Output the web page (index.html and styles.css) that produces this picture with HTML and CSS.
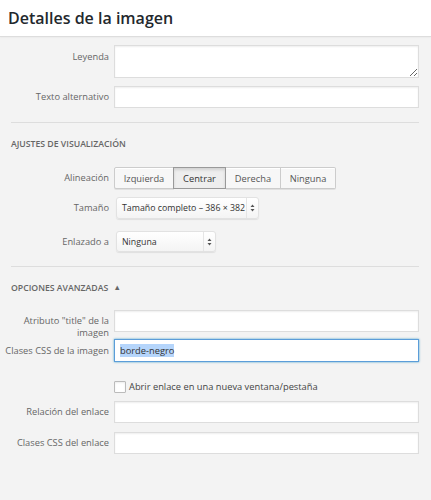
FILE: index.html
```html
<!DOCTYPE html>
<html lang="es">
<head>
<meta charset="utf-8">
<title>Detalles de la imagen</title>
<link rel="stylesheet" href="styles.css">
</head>
<body>
<header class="modal-header">
  <h1>Detalles de la imagen</h1>
</header>
<main class="settings">
  <div class="row row-caption">
    <label class="row-label">Leyenda</label>
    <div class="field"><textarea class="text-area"></textarea></div>
  </div>
  <div class="row row-alt">
    <label class="row-label">Texto alternativo</label>
    <div class="field"><input class="text-input" type="text"></div>
  </div>

  <hr class="divider divider-first">
  <h2 class="section-title">Ajustes de visualización</h2>

  <div class="row row-align">
    <span class="row-label">Alineación</span>
    <div class="button-group">
      <button class="seg-btn">Izquierda</button>
      <button class="seg-btn is-pressed">Centrar</button>
      <button class="seg-btn">Derecha</button>
      <button class="seg-btn">Ninguna</button>
    </div>
  </div>
  <div class="row row-size">
    <span class="row-label">Tamaño</span>
    <div class="select select-size">
      <span class="select-value">Tamaño completo – 386 × 382</span>
      <span class="select-arrows"><svg width="5" height="8" viewBox="0 0 5 8"><path d="M2.5 0.5L4.5 3H0.5Z M2.5 7.5L4.5 5H0.5Z" fill="#555"/></svg></span>
    </div>
  </div>
  <div class="row row-link">
    <span class="row-label">Enlazado a</span>
    <div class="select select-link">
      <span class="select-value">Ninguna</span>
      <span class="select-arrows"><svg width="5" height="8" viewBox="0 0 5 8"><path d="M2.5 0.5L4.5 3H0.5Z M2.5 7.5L4.5 5H0.5Z" fill="#555"/></svg></span>
    </div>
  </div>

  <hr class="divider divider-second">
  <h2 class="section-title advanced">Opciones avanzadas <span class="toggle-arrow">▲</span></h2>

  <div class="row row-title">
    <label class="row-label two-line">Atributo "title" de la<br>imagen</label>
    <div class="field"><input class="text-input" type="text"></div>
  </div>
  <div class="row row-classes">
    <label class="row-label">Clases CSS de la imagen</label>
    <div class="field"><div class="text-input is-focused"><span class="selected-text">borde-negro</span></div></div>
  </div>
  <div class="row row-check">
    <span class="row-label"></span>
    <label class="check-label"><span class="check-box"></span>Abrir enlace en una nueva ventana/pestaña</label>
  </div>
  <div class="row row-rel">
    <label class="row-label">Relación del enlace</label>
    <div class="field"><input class="text-input" type="text"></div>
  </div>
  <div class="row row-linkclass">
    <label class="row-label">Clases CSS del enlace</label>
    <div class="field"><input class="text-input" type="text"></div>
  </div>
</main>
</body>
</html>
```

FILE: styles.css
```css
* { box-sizing: border-box; }

html, body {
  margin: 0;
  padding: 0;
}

body {
  width: 431px;
  height: 500px;
  overflow: hidden;
  background: #f3f3f3;
  font-family: "Open Sans", "Noto Sans", sans-serif;
  font-size: 9.3px;
  color: #555;
}

/* Top bar */
.modal-header {
  height: 37px;
  background: #fff;
  border-bottom: 1px solid #dddddd;
  box-shadow: 0 0 2px rgba(0, 0, 0, 0.08);
  padding-left: 8px;
}

.modal-header h1 {
  margin: 0;
  font-size: 16px;
  font-weight: 600;
  line-height: 37px;
  color: #23282d;
}

/* Settings panel */
.settings {
  padding: 0 12px 0 2px;
  display: flex;
  flex-direction: column;
}

.row {
  display: flex;
  align-items: center;
}

.row-label {
  width: 112px;
  flex: none;
  text-align: right;
  padding-right: 5px;
  color: #666;
  line-height: 12px;
  white-space: nowrap;
}

.field { flex: 1; }

.text-input,
.text-area {
  display: block;
  width: 100%;
  background: #fff;
  border: 1px solid #ddd;
  box-shadow: inset 0 1px 2px rgba(0, 0, 0, 0.07);
  font: inherit;
  margin: 0;
  padding: 0 5px;
}

.text-input { height: 22px; }

.text-area {
  height: 33px;
  resize: vertical;
}

.row-caption { margin-top: 8px; align-items: flex-start; }
.row-caption .row-label { padding-top: 6px; }
.row-alt { margin-top: 8px; }

.divider {
  border: 0;
  border-top: 1px solid #dddddd;
  margin: 0 0 0 9px;
  height: 0;
}

.divider-first { margin-top: 14px; }
.divider-second { margin-top: 14px; }

.section-title {
  margin: 14px 0 0 9px;
  font-size: 8.7px;
  font-weight: 600;
  text-transform: uppercase;
  color: #666;
  line-height: 14px;
}

.toggle-arrow {
  font-size: 7.5px;
  margin-left: 3px;
  position: relative;
  top: -1px;
}

/* Alignment buttons */
.row-align { margin-top: 16px; }

.button-group { display: flex; }

.seg-btn {
  font: inherit;
  color: #555;
  height: 22px;
  padding: 0;
  margin: 0;
  background: #f7f7f7;
  border: 1px solid #ccc;
  border-left-width: 0;
  box-shadow: inset 0 1px 0 #fff, 0 1px 0 rgba(0, 0, 0, 0.08);
}

.seg-btn:first-child { border-left-width: 1px; border-radius: 2px 0 0 2px; width: 60px; }
.seg-btn:nth-child(2) { width: 53px; }
.seg-btn:nth-child(3) { width: 55px; }
.seg-btn:last-child { border-radius: 0 2px 2px 0; width: 55px; }

.seg-btn.is-pressed {
  background: #eee;
  border-color: #999;
  border-left-width: 1px;
  margin-left: -1px;
  box-shadow: inset 0 2px 3px rgba(0, 0, 0, 0.12);
  color: #333;
}

/* Dropdowns */
.select {
  display: flex;
  align-items: center;
  height: 22px;
  margin-left: 2px;
  background: linear-gradient(#fff, #f4f4f4);
  border: 1px solid #e2e2e2;
  border-radius: 3px;
  box-shadow: 0 1px 1px rgba(0, 0, 0, 0.08);
  color: #333;
  font-size: 8.8px;
}

.select-value {
  flex: 1;
  padding-left: 5px;
  white-space: nowrap;
}

.select-arrows {
  width: 12px;
  height: 100%;
  display: flex;
  align-items: center;
  justify-content: center;
  border-left: 1px solid #e5e5e5;
}

.select-size { width: 143px; }
.select-link { width: 100px; height: 21px; }

.row-size { margin-top: 8px; }
.row-link { margin-top: 12px; }

/* Advanced options */
.row-title { margin-top: 15px; align-items: flex-start; }
.row-title .row-label {
  line-height: 12px;
  padding-top: 5px;
  margin-bottom: -7px;
}
.row-classes { margin-top: 7px; }

.text-input.is-focused {
  height: 23px;
  border-color: #5b9dd9;
  box-shadow: 0 0 2px rgba(30, 140, 190, 0.8);
  display: flex;
  align-items: center;
  color: #333;
}

.selected-text {
  background: #b5d5fb;
  line-height: 13px;
}

.row-check { margin-top: 18px; }

.check-label {
  display: flex;
  align-items: center;
  color: #444;
}

.check-box {
  width: 12px;
  height: 12px;
  background: #fff;
  border: 1px solid #bbb;
  border-radius: 1px;
  box-shadow: inset 0 1px 2px rgba(0, 0, 0, 0.08);
  margin-right: 3px;
}

.row-rel { margin-top: 8px; }
.row-linkclass { margin-top: 9px; }
```
